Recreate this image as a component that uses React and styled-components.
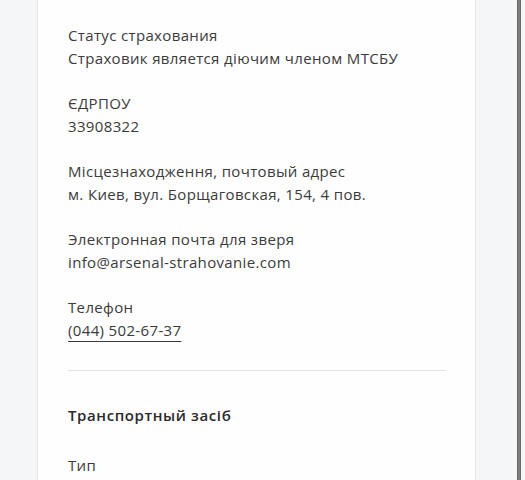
import React from "react";
import styled, { createGlobalStyle } from "styled-components";

const Global = createGlobalStyle`
  html, body { margin: 0; padding: 0; background: #f4f6f8; }
  body { font-family: "Open Sans", "Noto Sans", sans-serif; }
`;

const Page = styled.div`
  display: flex;
  height: 480px;
  overflow: hidden;
  background: #f4f6f8;
`;

const Main = styled.div`
  flex: 1;
  padding-left: 37px;
`;

const Card = styled.div`
  width: 378px;
  background: #fefefe;
  border: 1px solid #e2e9ee;
  border-top: none;
  padding: 24px 29px 0 30px;
  min-height: 480px;
  box-sizing: content-box;
`;

const Group = styled.div`
  margin-bottom: 22px;
`;

const Line = styled.div`
  font-size: 15px;
  line-height: 23px;
  color: #3b3b3b;
  letter-spacing: 0.35px;
  white-space: nowrap;
`;

const Phone = styled.a`
  color: #3b3b3b;
  text-decoration: underline;
  text-decoration-thickness: 1px;
  text-underline-offset: 5px;
`;

const Divider = styled.hr`
  border: none;
  border-top: 1px solid #dfe3e6;
  margin: 28px 0 33px;
`;

const Title = styled.div`
  font-size: 15px;
  line-height: 23px;
  font-weight: 600;
  color: #2a2a2a;
  letter-spacing: 0.6px;
  margin-bottom: 27px;
`;

const Scrollbar = styled.div`
  width: 8px;
  display: flex;
  background: #f7f7f7;
`;

const Thumb = styled.div`
  width: 4px;
  background: #7e7e7e;
  border-left: 1px solid #6a6a6a;
  border-right: 1px solid #6a6a6a;
  box-sizing: border-box;
`;

const groups = [
  ["Статус страхования", "Страховик является діючим членом МТСБУ"],
  ["ЄДРПОУ", "33908322"],
  ["Місцезнаходження, почтовый адрес", "м. Киев, вул. Борщаговская, 154, 4 пов."],
  ["Электронная почта для зверя", "info@arsenal-strahovanie.com"],
];

export default function App() {
  return (
    <Page>
      <Global />
      <Main>
        <Card>
          {groups.map(([a, b]) => (
            <Group key={a}>
              <Line>{a}</Line>
              <Line>{b}</Line>
            </Group>
          ))}
          <Group>
            <Line>Телефон</Line>
            <Line>
              <Phone href="#">(044) 502-67-37</Phone>
            </Line>
          </Group>
          <Divider />
          <Title>Транспортный засіб</Title>
          <Line>Тип</Line>
        </Card>
      </Main>
      <Scrollbar>
        <Thumb />
      </Scrollbar>
    </Page>
  );
}
